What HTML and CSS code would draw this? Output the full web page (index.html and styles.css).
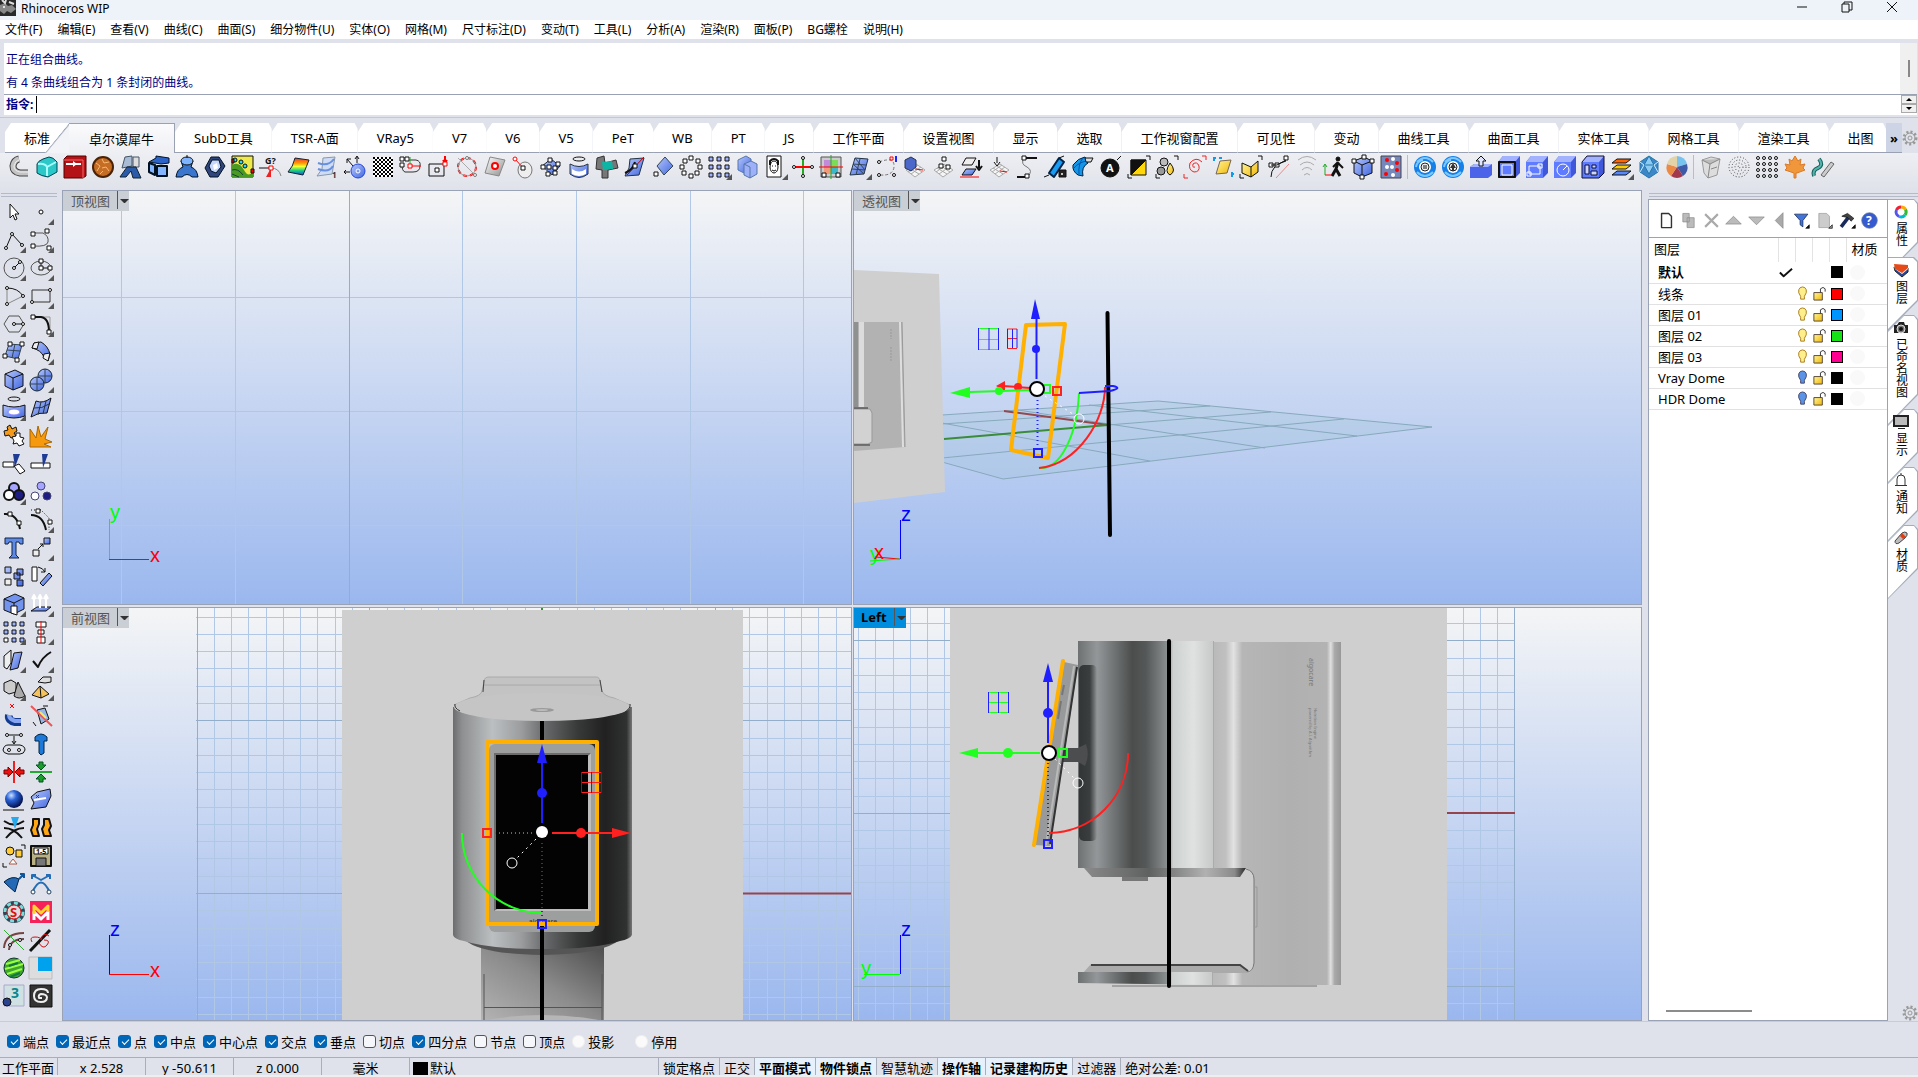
FILE: index.html
```html
<!DOCTYPE html>
<html lang="zh-CN">
<head>
    <meta charset="UTF-8">
    <meta name="viewport" content="width=device-width, initial-scale=1.0">
    <title>Rhinoceros WIP</title>
    <link rel="stylesheet" href="styles.css">
</head>
<body>
<svg class="defs" aria-hidden="true">
    <defs>
        <linearGradient id="gb" x1="0" y1="0" x2="1" y2="1"><stop offset="0" stop-color="#b7c8fc"/><stop offset="1" stop-color="#4167e0"/></linearGradient>
        <linearGradient id="gs" x1="0" y1="0" x2="1" y2="1"><stop offset="0" stop-color="#fff"/><stop offset="1" stop-color="#8d8d8d"/></linearGradient>
        <linearGradient id="gy" x1="0" y1="0" x2="1" y2="1"><stop offset="0" stop-color="#fff59a"/><stop offset="1" stop-color="#f2b705"/></linearGradient>
        <linearGradient id="gr" x1="0" y1="0" x2="0" y2="1"><stop offset="0" stop-color="#e33"/><stop offset=".3" stop-color="#f90"/><stop offset=".5" stop-color="#ef3"/><stop offset=".75" stop-color="#1c8"/><stop offset="1" stop-color="#24e"/></linearGradient>
        <radialGradient id="ball" cx=".35" cy=".3" r=".7"><stop offset="0" stop-color="#cfe2ff"/><stop offset=".4" stop-color="#2a63d8"/><stop offset="1" stop-color="#03124e"/></radialGradient>
        <linearGradient id="sky" x1="0" y1="0" x2="0" y2="1"><stop offset="0" stop-color="#f4f5f6"/><stop offset="1" stop-color="#9ab7ee"/></linearGradient>
        <linearGradient id="front"><stop offset="0" stop-color="#6a6c6d"/><stop offset=".05" stop-color="#8d8f90"/><stop offset=".22" stop-color="#bcbfc1"/><stop offset=".38" stop-color="#9b9d9f"/><stop offset=".52" stop-color="#656768"/><stop offset=".7" stop-color="#373838"/><stop offset=".85" stop-color="#212121"/><stop offset=".97" stop-color="#303131"/><stop offset="1" stop-color="#777"/></linearGradient>
        <linearGradient id="neck" x1="0" y1="1" x2="1" y2="0"><stop offset="0" stop-color="#b4b4b4"/><stop offset=".5" stop-color="#8b8b8b"/><stop offset="1" stop-color="#4b4b4b"/></linearGradient>
        <linearGradient id="drum"><stop offset="0" stop-color="#6e7172"/><stop offset=".14" stop-color="#939799"/><stop offset=".24" stop-color="#777b7c"/><stop offset=".4" stop-color="#4b4d4c"/><stop offset=".5" stop-color="#555858"/><stop offset=".66" stop-color="#8b9091"/><stop offset=".7" stop-color="#cdd1d0"/><stop offset=".85" stop-color="#dfe2e1"/><stop offset=".99" stop-color="#c7cac9"/><stop offset="1" stop-color="#999"/></linearGradient>
        <linearGradient id="back"><stop offset="0" stop-color="#b9b9b9"/><stop offset=".1" stop-color="#c0c0c0"/><stop offset=".16" stop-color="#e2e2e2"/><stop offset=".23" stop-color="#b6b6b6"/><stop offset=".6" stop-color="#b0b0b0"/><stop offset=".89" stop-color="#b3b3b3"/><stop offset=".92" stop-color="#e0e0e0"/><stop offset=".95" stop-color="#a9a9a9"/><stop offset="1" stop-color="#989898"/></linearGradient>
        <linearGradient id="shade"><stop offset="0" stop-color="#333636"/><stop offset=".6" stop-color="#333636" stop-opacity=".9"/><stop offset="1" stop-color="#333636" stop-opacity="0"/></linearGradient>
        <linearGradient id="lip"><stop offset="0" stop-color="#8a8a8a"/><stop offset=".4" stop-color="#5f6060"/><stop offset=".75" stop-color="#b1b1b1"/><stop offset=".93" stop-color="#8a8a8a"/><stop offset="1" stop-color="#2a2a2a"/></linearGradient>
    </defs>
</svg>

<div class="app">
    <header class="titlebar">
        <svg class="logo" viewBox="0 0 16 16"><rect width="16" height="16" fill="#2a2a2a"/><path d="M0 5L5 3 8 6 12 5 16 9 11 13 7 11 4 14 0 11Z" fill="#888"/><path d="M2 0L5 3 6 0M9 2L14 4" stroke="#ddd" stroke-width="2"/><circle cx="4" cy="7" r="1" fill="#fff"/></svg>
        <h1>Rhinoceros WIP</h1>
        <div class="window-buttons">
            <button aria-label="最小化"><svg viewBox="0 0 12 12"><path d="M1 6H11"/></svg></button>
            <button aria-label="还原"><svg viewBox="0 0 12 12"><path d="M1 3H8V11H1ZM3 3V1H11V9H8"/></svg></button>
            <button aria-label="关闭"><svg viewBox="0 0 12 12"><path d="M1 1L11 11M11 1L1 11"/></svg></button>
        </div>
    </header>

    <nav class="menu">
        <a href="#">文件(F)</a><a href="#">编辑(E)</a><a href="#">查看(V)</a><a href="#">曲线(C)</a><a href="#">曲面(S)</a><a href="#">细分物件(U)</a><a href="#">实体(O)</a><a href="#">网格(M)</a><a href="#">尺寸标注(D)</a><a href="#">变动(T)</a><a href="#">工具(L)</a><a href="#">分析(A)</a><a href="#">渲染(R)</a><a href="#">面板(P)</a><a href="#">BG螺栓</a><a href="#">说明(H)</a>
    </nav>

    <section class="command">
        <div class="history">
            <div class="history-text">
                <p>正在组合曲线。</p>
                <p>有 4 条曲线组合为 1 条封闭的曲线。</p>
            </div>
            <div class="history-scroll"><span></span></div>
        </div>
        <div class="prompt">
            <label for="cmd">指令:</label>
            <input id="cmd" type="text">
            <div class="spin"><button class="up" aria-label="上一条"></button><button class="down" aria-label="下一条"></button></div>
        </div>
    </section>

    <nav class="tabs">
        <button>标准</button><button class="active">卓尔谟犀牛</button><button>SubD工具</button><button>TSR-A面</button><button>VRay5</button><button>V7</button><button>V6</button><button>V5</button><button>PeT</button><button>WB</button><button>PT</button><button>JS</button><button>工作平面</button><button>设置视图</button><button>显示</button><button>选取</button><button>工作视窗配置</button><button>可见性</button><button>变动</button><button>曲线工具</button><button>曲面工具</button><button>实体工具</button><button>网格工具</button><button>渲染工具</button><button class="last">出图</button>
        <button class="more" aria-label="更多">»</button>
        <button class="gear" aria-label="选项"><svg viewBox="0 0 16 16"><circle class="cog" cx="8" cy="8" r="6"/><circle cx="8" cy="8" r="5"/><circle cx="8" cy="8" r="2"/></svg></button>
    </nav>

    <div class="toolbar" id="toolbar"></div>

    <main class="work">
        <aside class="side">
            <div class="grip"></div>
            <div class="side-tools" id="side"></div>
        </aside>

        <div class="views">
            <section class="view">
                <svg class="scene" viewBox="62 190 790 416" preserveAspectRatio="xMinYMin slice">
                    <rect x="62" y="190" width="790" height="416" fill="url(#sky)"/>
                    <path class="minor" d="M121.5 190V606M235.5 190V606M462.5 190V606M576.5 190V606M690.5 190V606M803.5 190V606M62 297.5H852M62 411.5H852M62 525.5H852"/>
                    <path class="major" d="M349.5 190V606"/>
                    <path class="ax-y" d="M109.5 519V559"/><path class="ax-x" d="M109 559.5H149"/>
                    <text class="ty" x="110" y="519">y</text><text class="tx" x="150" y="562">x</text>
                </svg>
                <button class="view-name">顶视图<i></i></button>
            </section>

            <section class="view">
                <svg class="scene" viewBox="853 190 789 416" preserveAspectRatio="xMinYMin slice">
                    <rect x="853" y="190" width="789" height="416" fill="url(#sky)"/>
                    <path d="M942 415L1158 401 1432 427 1003 479 942 462Z" fill="#9cc3d5" fill-opacity=".25"/>
                    <path class="floor" d="M942 415L1158 401 1432 427 1003 479 942 462M942 458L1344 419M1108 425L1271 412M942 424L1210 406M942 423L1150 461M1018 410L1265 448M1089 405L1357 436"/>
                    <path d="M1004 411L1108 425" stroke="#95484e" stroke-width="2"/>
                    <path d="M944 439L1108 425" stroke="#3a8c3a" stroke-width="2"/>
                    <path d="M853 270L939 274 945 492 853 503Z" fill="#cfcfcf"/>
                    <path d="M853 322L902 322 905 447 853 451Z" fill="#b2b2b2"/>
                    <path d="M853 322H858V407H853Z" fill="#8f9191"/><path d="M859 322H864V407H859Z" fill="#dcdcdc"/>
                    <path d="M900 322L903 447" stroke="#dedede" stroke-width="2"/><path d="M902 322L905 447" stroke="#999"/>
                    <path d="M891 329V339M891 347V361" stroke="#999" stroke-dasharray="2 1"/>
                    <path d="M853 409H870L872 413V442L868 444H853Z" fill="#d2d2d2" stroke="#999"/>
                    <path d="M853 408H868M853 445H870" stroke="#333"/>
                    <path d="M1107.5 313L1110 535" stroke="#000" stroke-width="4" stroke-linecap="round"/>
                    <path class="pick" d="M1026 325L1065 324 1048 458 1011 450Z"/>
                    <path class="gl" d="M1079 393C1077 436 1060 470 1039 468"/>
                    <path class="rl" d="M1105 387C1105 420 1078 464 1039 468"/>
                    <path class="bl" d="M1079 393L1110 391Q1123 388 1113 386L1105 386"/>
                    <path class="rl" d="M1030 388L1003 386"/><path class="rf" d="M996 386L1005 381V391Z"/><circle class="rf" cx="1018" cy="387" r="4"/>
                    <path class="gl" d="M1030 390L970 392"/><path class="gf" d="M950 393L970 387V398Z"/><circle class="gf" cx="999" cy="391" r="4"/>
                    <path class="bl" d="M1036.500 379V317"/><path class="bf" d="M1035 299L1040 319H1031Z"/><circle class="bf" cx="1036" cy="349" r="4"/>
                    <path class="bd" d="M1037.500 400V449"/><rect class="bl" x="1034" y="449" width="8" height="8"/>
                    <rect class="gl" x="1043" y="385" width="7" height="8"/><rect class="rl" x="1053" y="387" width="8" height="8"/>
                    <path class="wd" d="M1045 396L1076 416"/><circle class="wo" cx="1079" cy="419" r="5"/>
                    <circle class="hub" cx="1037" cy="389" r="7"/>
                    <path class="gt" d="M979 328.500H999M979 339.500H999M979 349.500H999"/><path class="bt" d="M978.500 328V350M989 328V350M998.500 328V350"/>
                    <path class="rt" d="M1007 329H1017M1007 338.500H1017M1007 348.500H1017"/><path class="bt" d="M1007.500 329V348M1012.500 329V348M1017 329V348"/>
                    <path class="ax-z" d="M900.500 520V559"/><path class="ax-x" d="M900 559L875 557"/><path class="ax-y" d="M900 559L870 561"/>
                    <text class="tz" x="901" y="521">z</text><text class="ty" x="870" y="561">y</text><text class="tx" x="874" y="559">x</text>
                </svg>
                <button class="view-name">透视图<i></i></button>
            </section>

            <section class="view">
                <svg class="scene" viewBox="62 608 790 414" preserveAspectRatio="xMinYMin slice">
                    <rect x="62" y="608" width="790" height="414" fill="url(#sky)"/>
                    <g class="grid" data-x="542" data-y="894" data-left="196" data-right="852"></g>
                    <path d="M542 894.500H852" stroke="#96444b" stroke-width="2"/><path d="M542 608V612" stroke="#3a8c3a" stroke-width="2"/>
                    <rect x="342" y="611" width="401" height="412" fill="#cfcfcf"/>
                    <path d="M484 683Q484 678 489 678H596Q600 678 600 683L602 692Q604 697 614 699L630 706H454L470 699Q481 697 482 692Z" fill="#c3c3c3" stroke="#aaa"/>
                    <path d="M484 686H600" stroke="#aaa"/><path d="M484 681L483 693M600 681L602 693" stroke="#444"/>
                    <path d="M481 944H604V1022H481Z" fill="url(#neck)"/><path d="M484 975V1022M602 975V1022M484 1008.500H602" stroke="#555"/><path d="M481 1022Q542 1010 604 1022Z" fill="#b6b6b6"/>
                    <path d="M465 941Q480 955 542 956Q604 955 619 941Z" fill="#555"/>
                    <path d="M453 708V936Q454 940 464 942Q488 950 542 950Q596 950 620 942Q630 940 632 936V708Z" fill="url(#front)"/>
                    <ellipse cx="542" cy="708" rx="88" ry="14" fill="#c5c5c5"/><path d="M455 705Q454 709 460 712M630 705Q631 709 625 713" fill="none" stroke="#333"/>
                    <ellipse cx="542" cy="711" rx="12" ry="2" fill="#999"/><ellipse cx="542" cy="711" rx="6" ry="1" fill="#bbb"/>
                    <path d="M542 722V1022" stroke="#000" stroke-width="4"/>
                    <rect x="489" y="745" width="106" height="188" rx="6" fill="#9d9e9e"/><rect x="494" y="754" width="97" height="158" fill="#bdbdbd"/><path d="M494 754H591L588 757H497V910L494 912Z" fill="#6c6c6c"/><rect x="496" y="756" width="92" height="154" fill="#030303"/>
                    <text class="brand dark" x="543" y="925" text-anchor="middle">algocare</text>
                    <path d="M542 925V1022" stroke="#000" stroke-width="4"/>
                    <rect class="pick" x="487" y="743" width="110" height="182"/>
                    <path class="gl" d="M462 834A80 80 0 0 0 542 914"/>
                    <path class="bl" d="M542 824V762"/><path class="bf" d="M542 745L547 764H537Z"/><circle class="bf" cx="542" cy="794" r="5"/>
                    <path class="rl" d="M552 834H614"/><path class="rf" d="M631 834L612 829V839Z"/><circle class="rf" cx="581" cy="834" r="5"/>
                    <path class="rd" d="M495 834H534"/><rect class="rl" x="483" y="830" width="8" height="8"/>
                    <path class="bd" d="M542 844V920"/><rect class="bl" x="538" y="921" width="8" height="8"/>
                    <path class="wd" d="M536 840L516 860"/><circle class="wo" cx="512" cy="864" r="5"/><circle cx="542" cy="833" r="6" fill="#fff"/>
                    <path class="rt" d="M582 773.500H602M582 783.500H602M582 793.500H602"/><path class="bt" d="M581.500 773V794M591.500 773V794M601.500 773V794"/>
                    <path class="ax-z" d="M109.500 936V975"/><path class="ax-x" d="M109 975.500H149"/>
                    <text class="tz" x="110" y="937">z</text><text class="tx" x="150" y="978">x</text>
                </svg>
                <button class="view-name">前视图<i></i></button>
            </section>

            <section class="view">
                <svg class="scene" viewBox="853 608 789 414" preserveAspectRatio="xMinYMin slice">
                    <rect x="853" y="608" width="789" height="414" fill="url(#sky)"/>
                    <g class="grid" data-x="1169" data-y="814" data-left="853" data-right="1515"></g>
                    <path d="M1169 814H1515" stroke="#96444b" stroke-width="2"/>
                    <rect x="950" y="609" width="497" height="413" fill="#cfcfcf"/>
                    <path d="M1213 643H1341V986H1213V974H1248Q1254 972 1254 964V880Q1252 871 1246 869H1213Z" fill="url(#back)"/>
                    <rect x="1078" y="642" width="136" height="227" fill="url(#drum)"/>
                    <rect x="1079" y="666" width="18" height="176" rx="5" fill="url(#shade)"/>
                    <path d="M1084 869H1246L1240 878H1092Z" fill="url(#lip)"/><path d="M1122 878H1148V882H1122Z" fill="#777"/>
                    <path d="M1246 870Q1254 872 1254 880V964Q1253 973 1247 973" fill="none" stroke="#777"/><path d="M1254 888H1257V928H1254" fill="none" stroke="#999"/>
                    <path d="M1091 965H1240L1249 974H1083Z" fill="#aaa"/><path d="M1091 966H1240L1248 972" fill="none" stroke="#444" stroke-width="2"/>
                    <path d="M1078 973H1213V986L1078 984Z" fill="url(#drum)"/><path d="M1112 987H1317" stroke="#777"/>
                    <text class="brand side-brand" transform="translate(1309 659) rotate(90)">algocare</text>
                    <text class="tiny" transform="translate(1314 709) rotate(90)">Nutrition Engine</text><text class="tiny" transform="translate(1309 709) rotate(90)">powered by A.I. Algorithm</text>
                    <path d="M1062 749H1078L1086 745Q1090 756 1085 767L1078 763H1060Z" fill="#4b4d4e"/>
                    <path d="M1064 663L1078 666 1050 847 1035 846Z" fill="#97999a"/><path d="M1074 667L1046 846" stroke="#b9b9b9" stroke-width="2"/><path d="M1077 668L1050 845" stroke="#333" stroke-width="2"/>
                    <path d="M1064 686L1062 696M1061 702L1058 720" stroke="#777" stroke-width="2"/>
                    <path d="M1169 642V987" stroke="#000" stroke-width="4" stroke-linecap="round"/>
                    <path class="pick" d="M1063 662L1034 846"/>
                    <path class="rl" d="M1128 754A80 80 0 0 1 1049 834"/>
                    <path class="bl" d="M1048 744V682"/><path class="bf" d="M1048 664L1053 683H1043Z"/><circle class="bf" cx="1048" cy="714" r="5"/>
                    <path class="gl" d="M1040 754H978"/><path class="gf" d="M959 754L978 749V759Z"/><circle class="gf" cx="1008" cy="754" r="5"/>
                    <rect class="gl" x="1059" y="750" width="8" height="8"/><path class="bd" d="M1048 764V840"/><rect class="bl" x="1044" y="841" width="8" height="8"/>
                    <path class="wd" d="M1055 760L1075 780"/><circle class="wo" cx="1078" cy="784" r="5"/><circle class="hub" cx="1049" cy="754" r="7"/>
                    <path class="gt" d="M988 693.500H1009M988 703.500H1009M988 713.500H1009"/><path class="bt" d="M988.500 693V714M998.500 693V714M1008.500 693V714"/>
                    <path class="ax-z" d="M900.500 936V975"/><path class="ax-y" d="M864 975.500H900"/>
                    <text class="tz" x="901" y="937">z</text><text class="ty" x="861" y="976">y</text>
                </svg>
                <button class="view-name current">Left<i></i></button>
            </section>
        </div>

        <aside class="dock">
            <div class="grip"></div>
            <div class="dock-row">
                <div class="panel">
                    <div class="panel-tools" id="panelTools"></div>
                    <table class="layers">
                        <colgroup><col class="name"><col><col><col><col><col class="mat"></colgroup>
                        <thead><tr><th>图层</th><th></th><th></th><th></th><th></th><th class="mat">材质</th></tr></thead>
                        <tbody id="layers"></tbody>
                    </table>
                    <div class="hscroll"><span></span></div>
                </div>
                <nav class="dock-tabs">
                    <button><svg viewBox="0 0 16 16"><g fill="none" stroke-width="3"><path d="M8 3A5 5 0 0 1 12.500 5.500" stroke="#fa0"/><path d="M12.500 5.500A5 5 0 0 1 12 11" stroke="#3b3"/><path d="M12 11A5 5 0 0 1 6 12.500" stroke="#0bc"/><path d="M6 12.500A5 5 0 0 1 3.500 6" stroke="#55e"/><path d="M3.500 6A5 5 0 0 1 8 3" stroke="#e23"/></g></svg><span>属性</span></button>
                    <button class="active"><svg viewBox="0 0 16 16"><path d="M1 5L15 6V10L9 15 2 9Z" fill="#234a9c" stroke="#222"/><path d="M1 3L15 4V7L9 12 2 7Z" fill="#fff"/><path d="M1 2L15 3V6L9 11 2 7Z" fill="#e64a19"/></svg><span>图层</span></button>
                    <button><svg viewBox="0 0 16 16"><path d="M1 5H4L6 2H11L12 5H15V13H1Z" fill="#222"/><circle cx="8" cy="9" r="4" fill="#777" stroke="#ddd"/><circle cx="8" cy="9" r="2" fill="#111"/></svg><span>已命名视图</span></button>
                    <button><svg viewBox="0 0 16 16"><path d="M1 2H15V12H1Z" fill="#bbb" stroke="#222" stroke-width="2"/><path d="M5 14H12V15H5Z" fill="#222"/></svg><span>显示</span></button>
                    <button><svg viewBox="0 0 16 16"><path d="M4 13V7Q4 3 8 3Q12 3 12 7V13M2 13.500H14M7 2H9" fill="none" stroke="#333"/></svg><span>通知</span></button>
                    <button><svg viewBox="0 0 16 16"><path d="M2 11L9 3Q12 1 14 3Q15 5 12 8L6 13Q2 15 2 11Z" fill="#bbb" stroke="#444"/><path d="M7 6L9 3 13 7 10 9Z" fill="#e43a12"/></svg><span>材质</span></button>
                </nav>
                <svg class="dock-gear" viewBox="0 0 16 16"><circle class="cog" cx="8" cy="8" r="6"/><circle cx="8" cy="8" r="5"/><circle cx="8" cy="8" r="2"/></svg>
            </div>
        </aside>
    </main>

    <form class="osnap">
        <label><input type="checkbox" checked>端点</label><label><input type="checkbox" checked>最近点</label><label><input type="checkbox" checked>点</label><label><input type="checkbox" checked>中点</label><label><input type="checkbox" checked>中心点</label><label><input type="checkbox" checked>交点</label><label><input type="checkbox" checked>垂点</label><label><input type="checkbox">切点</label><label><input type="checkbox" checked>四分点</label><label><input type="checkbox">节点</label><label><input type="checkbox">顶点</label><label><input class="soft" type="checkbox">投影</label><label class="apart"><input class="soft" type="checkbox">停用</label>
    </form>

    <footer class="status">
        <button>工作平面</button><span class="coord">x 2.528</span><span class="coord">y -50.611</span><span class="coord">z 0.000</span><span class="coord">毫米</span><span class="layer"><i></i>默认</span>
        <button>锁定格点</button><button>正交</button><button class="on">平面模式</button><button class="on">物件锁点</button><button>智慧轨迹</button><button class="on">操作轴</button><button class="on">记录建构历史</button><button>过滤器</button><span class="rest">绝对公差: 0.01</span>
    </footer>
</div>
<script src="script.js"></script>
</body>
</html>
```

FILE: styles.css
```css
* { box-sizing: border-box; }
body {
    margin: 0;
    background: #dfe2ea;
    color: #000;
    font-family: "Noto Sans", "Noto Sans CJK SC", sans-serif;
    font-size: 13px;
}
button, input { font: inherit; color: inherit; }
button { border: 0; padding: 0; background: none; }
p, h1 { margin: 0; }
svg { display: block; }
.defs { position: absolute; width: 0; height: 0; }
.app { min-height: 100vh; display: flex; flex-direction: column; overflow: hidden; }

/* title and menu */
.titlebar { height: 20px; display: flex; align-items: flex-start; background: #eef3fa; }
.logo { width: 16px; height: 16px; }
.titlebar h1 { margin-left: 5px; font-size: 12px; font-weight: 400; line-height: 17px; }
.window-buttons { margin-left: auto; display: flex; gap: 33px; padding: 1px 20px 0 0; }
.window-buttons svg { width: 12px; height: 12px; fill: none; stroke: #111; }
.menu { display: flex; gap: 15px; height: 19px; padding-left: 5px; background: #fff; font-size: 12px; line-height: 19px; }
.menu a { color: #000; text-decoration: none; }

/* command line */
.command { margin: 4px 1px 0 4px; height: 72px; background: #fff; display: flex; flex-direction: column; font-size: 12px; color: #000080; }
.history { flex: 1; display: flex; border-bottom: 1px solid #99a1b3; }
.history-text { flex: 1; padding: 5px 2px 0; line-height: 23px; }
.history-scroll { width: 17px; background: #f0f0f0; padding: 17px 0 0 8px; }
.history-scroll span { display: block; width: 2px; height: 17px; background: #888; }
.prompt { display: flex; height: 21px; padding: 0 0 3px 2px; align-items: center; }
.prompt label { font-weight: 700; }
.prompt input { flex: 1; height: 17px; margin-left: 3px; border: 0; border-left: 1px solid #000; outline: 0; background: #fff; }
.spin { width: 16px; display: flex; flex-direction: column; }
.spin button { display: grid; place-items: center; height: 9px; border: 1px solid #aaa; background: #f0f0f0; }
.spin button::after { content: ""; border: solid transparent; border-width: 0 3px 3px; border-bottom-color: #000; }
.spin .down::after { border-width: 3px 3px 0; border-top-color: #000; }

/* toolbar tabs */
.tabs { display: flex; height: 36px; margin-top: 2px; padding: 5px 0 0 5px; border-top: 1px solid #c2c8d5; }
.tabs button { padding: 0 19px; height: 30px; background: #fff; clip-path: polygon(6px 0, calc(100% - 3px) 0, 100% 6px, 100% 100%, 0 100%, 0 9px); white-space: nowrap; border-bottom: 1px solid #99a1b3; }
.tabs .active { position: relative; background: linear-gradient(#fbfbfd, #eeeff3); clip-path: polygon(0 0, 100% 0, 100% 100%, -24px 100%, 0 0); border-top: 1px solid #99a1b3; border-right: 1px solid #99a1b3; border-bottom: 0; padding: 0 20px; }
.tabs .active::before { content: ""; position: absolute; z-index: -1; top: 0; left: -24px; width: 24px; height: 29px; background: linear-gradient(to bottom right, transparent 49%, #99a1b3 50%, #f3f4f7 54%); }
.tabs button:first-child { clip-path: polygon(6px 0, 100% 0, calc(100% - 24px) 100%, 0 100%, 0 9px); }
.tabs .last { flex: 1; padding: 0 6px 0 19px; text-align: left; }
.tabs .more { width: 16px; padding: 0; background: #cdd4e6; clip-path: none; font-weight: 700; }
.tabs .gear { width: 16px; padding: 0; background: none; clip-path: none; border: 0; }
.gear svg, .dock-gear { width: 16px; height: 16px; fill: none; stroke: #999; }
.cog { stroke-width: 3; stroke-dasharray: 2 2; }

/* icon toolbars */
.toolbar { display: flex; height: 37px; padding: 0 0 0 5px; background: linear-gradient(#eeeff3, #dfe2ea); }
.tool { position: relative; width: 28px; height: 28px; display: grid; place-items: center; flex: none; }
.tool svg { width: 24px; height: 24px; overflow: visible; }
.tool.more::after { content: ""; position: absolute; right: 1px; bottom: 1px; border: 3px solid transparent; border-right-color: #555; border-bottom-color: #555; }
.sep { width: 1px; height: 24px; margin: 2px 3px 0 2px; background: #b9bdc9; }
.work { flex: 1; display: flex; min-height: 0; }
.side { width: 62px; padding-top: 3px; }
.grip { height: 4px; margin: 0 5px 0 1px; border: solid #b4bac8; border-width: 1px 0; }
.side-tools { display: grid; grid-template-columns: 27px 28px; padding-top: 1px; }
.side-tools .tool { width: auto; }

/* viewports */
.views { flex: 1; display: grid; grid-template: 416fr 414fr / 790fr 789fr; gap: 2px 1px; min-width: 0; }
.view { position: relative; min-height: 0; border: 1px solid #9aa3b5; overflow: hidden; }
.scene { position: absolute; inset: -1px; width: calc(100% + 2px); height: calc(100% + 2px); }
.view-name { position: relative; display: flex; align-items: center; height: 20px; padding: 0 0 2px 8px; background: #cacfd6; color: #555; }
.view-name i { display: block; width: 12px; height: 18px; margin-left: 7px; border-left: 1px solid #555; }
.view-name i::after { content: ""; display: block; margin: 8px 0 0 2px; border: 4px solid transparent; border-top-color: #333; }
.view-name.current { background: #008ddd; color: #000; font-weight: 700; padding-left: 7px; }
.minor { stroke: #b1c7e6; fill: none; }
.major { stroke: #93aecb; fill: none; }
.floor { stroke: #87a9bc; fill: none; }
.pick { fill: none; stroke: #ffb000; stroke-width: 4; stroke-linejoin: round; stroke-linecap: round; }
.bl, .bd { fill: none; stroke: #2020ff; stroke-width: 2; }
.rl, .rd { fill: none; stroke: #ff2020; stroke-width: 2; }
.gl { fill: none; stroke: #20ff20; stroke-width: 2; }
.bd, .rd { stroke-dasharray: 1 3; }
.bf { fill: #2020ff; }
.rf { fill: #ff2020; }
.gf { fill: #20ff20; }
.gt { stroke: #20ff20; }
.bt { stroke: #2020ff; }
.rt { stroke: #ff2020; }
.wd { stroke: #fff; stroke-dasharray: 2 4; }
.wo { fill: none; stroke: #fff; }
.hub { fill: #fff; stroke: #000; stroke-width: 2; }
.ax-x { stroke: #f00; }
.ax-y { stroke: #0f0; }
.ax-z { stroke: #00f; }
.tx, .ty, .tz { font-family: "Liberation Sans", sans-serif; font-size: 20px; }
.tx { fill: #f00; }
.ty { fill: #0f0; }
.tz { fill: #00f; }
.brand { font-size: 7px; fill: #777; }
.dark { fill: #333; }
.tiny { font-size: 4px; fill: #777; }

/* layer panel */
.dock { width: 276px; padding: 3px 0 0 6px; display: flex; flex-direction: column; }
.dock .grip { margin-right: 0; }
.dock-row { position: relative; flex: 1; display: flex; margin-top: 2px; }
.panel { flex: 1; display: flex; flex-direction: column; background: #fff; border: 1px solid #9aa3b5; min-width: 0; }
.panel-tools { height: 38px; display: flex; align-items: center; justify-content: space-between; padding: 3px 7px 0; border-bottom: 1px solid #9aa3b5; }
.panel-tools .tool { width: 20px; height: 20px; }
.panel-tools svg { width: 17px; height: 17px; }
.layers { width: 100%; border-collapse: collapse; table-layout: fixed; }
.layers col { width: 17px; }
.layers .name { width: 129px; }
.layers col.mat { width: 41px; }
.layers th { height: 24px; padding: 0 0 2px 5px; border-right: 1px solid #e3e3e3; text-align: left; font-weight: 400; line-height: 18px; }
.layers th.mat { border: 0; }
.layers td { height: 21px; padding: 0; border-bottom: 1px solid #e1e1e1; line-height: 18px; }
.layers td:first-child { padding-left: 9px; }
.layers .default td { font-weight: 700; }
.layers svg { width: 15px; height: 15px; }
.swatch { display: block; width: 12px; height: 12px; border: 1px solid #000; margin-left: 2px; }
.dot { display: block; width: 15px; height: 15px; margin-left: 4px; border-radius: 50%; background: #f9f9f9; }
.hscroll { margin-top: auto; padding: 0 0 8px 17px; }
.hscroll span { display: block; width: 86px; height: 2px; background: #8c8c8c; }
.dock-tabs { width: 30px; display: flex; flex-direction: column; flex: none; }
.dock-tabs button { position: relative; display: flex; flex-direction: column; align-items: center; gap: 2px; padding: 5px 5px 11px 0; font-size: 12px; line-height: 14px; }
.dock-tabs button::before, .dock-tabs button::after { content: ""; position: absolute; z-index: -1; inset: 0 0 -16px 0; background: #a4abbb; clip-path: polygon(0 16px, 16px 0, 26px 0, 100% 4px, 100% calc(100% - 30px), 0 100%); }
.dock-tabs button::after { inset: 1px 1px -15px 0; background: #fff; }
.dock-tabs button:first-child::before, .dock-tabs button:first-child::after, .dock-tabs .active::before, .dock-tabs .active::after { clip-path: polygon(0 0, 26px 0, 100% 4px, 100% calc(100% - 30px), 0 100%); }
.dock-tabs .active::after { left: -1px; }
.dock-tabs svg { width: 16px; height: 16px; }
.dock-tabs span { writing-mode: vertical-rl; }
.dock-gear { position: absolute; right: 0; bottom: 0; }

/* bottom bars */
.osnap { height: 36px; display: flex; align-items: center; gap: 7px; padding: 4px 0 0 7px; border-top: 1px solid #c8ccd6; }
.osnap label { display: flex; align-items: center; gap: 3px; }
.osnap input { appearance: none; width: 13px; height: 13px; margin: 0; border: 1px solid #555; border-radius: 3px; background: #f6f7fa; }
.osnap input:checked { border-color: #0067b8; background: #0067b8; }
.osnap input:checked::after { content: ""; display: block; width: 6px; height: 3px; margin: 3px 0 0 3px; border: solid #fff; border-width: 0 0 1px 1px; rotate: -45deg; }
.osnap input.soft { border-color: #eee; border-radius: 6px; background: #fafafa; }
.osnap .apart { margin-left: 14px; }
.status { height: 20px; display: flex; border-top: 1px solid #a9aebb; border-bottom: 2px solid #eee; line-height: 21px; overflow: hidden; }
.status > * { padding: 0 4px; border-right: 1px solid #a9aebb; white-space: nowrap; height: 21px; }
.status > :first-child { padding: 0 3px 0 2px; }
.status .coord { width: 88px; text-align: center; }
.status .layer { width: 249px; display: flex; align-items: center; gap: 2px; padding-left: 3px; }
.layer i { width: 15px; height: 14px; background: #000; }
.status .on { background: #e6f1fb; font-weight: 700; }
.status .rest { flex: 1; border: 0; }
```

FILE: script.js
```js
// small drawing helpers, every icon is drawn in a 24x24 box
const p = (d, f = 'none', s = '#111', w = 1) => `<path d="${d}" fill="${f}" stroke="${s}" stroke-width="${w}" stroke-linejoin="round"/>`;
const c = (x, y, r, f = 'none', s = '#111', w = 1) => `<circle cx="${x}" cy="${y}" r="${r}" fill="${f}" stroke="${s}" stroke-width="${w}"/>`;
const e = (x, y, a, b, f = 'none', s = '#111') => `<ellipse cx="${x}" cy="${y}" rx="${a}" ry="${b}" fill="${f}" stroke="${s}"/>`;
const n = (...a) => { let o = ''; for (let i = 0; i < a.length; i += 2) o += p(`M${a[i] - 2} ${a[i + 1] - 2}h4v4h-4Z`, '#fff'); return o; };
const o = (...a) => { let r = ''; for (let i = 0; i < a.length; i += 2) r += c(a[i], a[i + 1], 1.5, '#fff'); return r; };
const t = (x, y, s, txt, f = '#111') => `<text x="${x}" y="${y}" font-size="${s}" font-weight="700" fill="${f}">${txt}</text>`;
const B = 'url(#gb)', G = 'url(#gs)', Y = 'url(#gy)', none = 'none';
const block = (top) => p('M1 7L6 1H23V18L18 23H1Z', '#3f57d8', none) + p('M1 7L6 1H23L18 7Z', '#a3b2ff', none) + p('M1 7H18V23H1Z', '#5f7bff', none) + top;
const corners = p('M1 19V23H5M19 1H23V5');
const cube = p('M3 6L13 2 21 6V18L11 22 3 18Z', B) + p('M3 6L11 10 21 6M11 10V22');
const swirl = c(12, 12, 11, '#1580e8', none) + p('M4 7Q12-1 20 7M20 17Q12 25 4 17M3 12Q4 6 10 5', none, '#7cc8ff', 2) + c(12, 12, 6, '#fff', none) + c(12, 12, 4, '#eee', '#222');
const mesh = p('M3 15L13 9 22 15 12 22ZM6 13L16 19M10 11L19 17M8 19L18 12M5 17L15 10', '#f5f5f5', '#aaa');

const toolbar = [
    ['管', p('M21 18H13Q6 17 6 11Q7 5 12 4', none, '#444', 7) + p('M21 18H13Q6 17 6 11Q7 5 12 4', none, '#c4c4c4', 5) + p('M21 17H13Q7 16 7 11Q8 6 12 5', none, '#eee', 1)],
    ['方块', p('M2 9Q3 6 8 4L14 2Q18 2 22 7V17L13 22Q6 21 2 18Z', '#2cc7c7', '#045') + p('M3 9Q10 8 12 12V21M12 12L21 7', none, '#a8ffff', 2)],
    ['盒', p('M1 4L4 1H23V21L20 23H1Z', '#b31217', '#500') + p('M1 5H20V23', none, '#f66') + p('M3 9H18', none, '#fff', 2) + p('M10 6L14 9 10 12', '#fff', none)],
    ['球', c(12, 12, 10, '#c56d25', '#4a2206', 2) + p('M5 8L9 11 6 16M11 4L13 8 18 7M11 13L15 12 18 16M9 19L12 16', none, '#f7b872', 1)],
    ['窗', p('M6 2L13 1V11L3 13Z', '#a9bcd6', '#456') + p('M14 2H20V12H14Z', '#ddd', '#456') + p('M8 12H17L22 23H14L12 16 7 22H1Z', '#2b5aa8', '#123')],
    ['板', p('M2 7L9 3V1L22 3V8L14 9Z', '#2b63c6', '#012') + p('M2 8L8 10V20L2 17ZM10 11H20V21H10Z', '#83b6ff', '#012', 2)],
    ['椅', p('M6 6H18L16 12Q22 14 23 22H17Q12 17 7 22H1Q2 14 8 12Z', '#3a76cd', '#012') + e(12, 6, 6, 4, '#7fb4ff') + p('M12 0V3')],
    ['螺母', p('M8 2H16L22 11 15 22H7L2 13Z', '#30457e', '#012') + p('M9 5L16 5 18 12 13 18 8 16 6 11Z', '#c7d6fb', '#012') + p('M10 10L14 8 15 13 11 15Z', '#fff', none)],
    ['地图', p('M1 1H22V22H1Z', '#efe94c', '#111') + p('M1 10Q8 6 13 15T22 15V22H1Z', '#4a9a22', none) + p('M1 15Q7 13 12 20M1 19L8 22', none, '#143') + c(4, 5, 2, '#2df') + c(10, 7, 2, '#2df') + c(14, 11, 2, '#2df') + p('M1 4H3V8H1ZM20 14H23V18H20Z', 'red')],
    ['连续性', t(6, 9, 9, 'G?') + p('M0 13H12') + p('M12 13Q20 13 22 21', none, '#888') + p('M12 13L7 22H12Z', '#e22', none) + p('M10 11H14V15H10Z', '#fff', 'red')],
    ['斑马纹', p('M8 3L22 5Q20 10 16 20L1 17Q6 12 8 3Z', 'url(#gr)', '#123')],
    ['曲率', p('M8 3L20 2 17 19 2 21 7 14Z', '#cfdcf8', '#89a') + p('M3 8Q13 12 19 4M3 14Q14 18 18 11', none, '#668fdf', 2) + t(17, 23, 8, '1', '#333')],
    ['缩放球', c(15, 16, 7, 'url(#gb)', '#24d') + c(15, 16, 2, none, '#fff') + p('M14 8V2M12 4L14 1 16 4M10 11L4 4M4 8V4H8M7 17H1M3 15L1 17 3 19')],
    ['棋盘', p('M2 2H22V22H2Z', '#fff', none) + `<path d="M2 3H22M2 7H22M2 11H22M2 15H22M2 19H22" stroke="#000" stroke-width="2" stroke-dasharray="2 2"/><path d="M4 5H22M4 9H22M4 13H22M4 17H22M4 21H22" stroke="#000" stroke-width="2" stroke-dasharray="2 2"/>`],
    ['操作轴', p('M8 5H17Q22 6 21 11Q21 17 14 17H6Q3 16 3 10', none, '#333') + n(3, 4, 8, 4, 3, 10) + p('M11 11V2', none, '#2a2') + p('M11 11H22', none, 'red') + p('M9 9H13V13H9Z', '#fff', 'red')],
    ['移入', p('M2 9H17V21H2Z') + n(10, 15) + p('M18 1V7M16 5L18 8 20 5', none, 'red', 2) + p('M16 7H20V11H16Z', '#fff', 'red')],
    ['虚线圆', `<circle cx="12" cy="12" r="9" fill="none" stroke="red" stroke-width="2" stroke-dasharray="4 3"/>` + c(12, 12, 9, none, '#999') + p('M3 3L21 21', none, '#aaa') + c(12, 3, 1.5, '#fff', '#777') + c(20, 20, 1.5, '#fff', '#777')],
    ['页', p('M7 2L22 5 16 21 2 18Z', G, '#888') + c(12, 11, 3, '#fff', 'red', 2)],
    ['椭圆', e(14, 15, 7, 8, '#eee', '#777') + p('M4 4L13 14', none, 'red') + c(4, 4, 2, '#fff', 'red') + n(12, 13)],
    ['控制点', p('M3 11L12 4 21 11 13 20Z', B, '#234') + n(4, 12, 10, 12, 16, 13, 11, 5, 19, 9, 9, 19, 16, 18)],
    ['圆柱', e(12, 4, 6, 2) + p('M3 9Q12 14 21 9V19Q12 26 3 19Z', B, '#234') + p('M5 14Q12 19 19 14V19Q12 23 5 19Z', '#fff', none)],
    ['十字', p('M2 3L9 1 10 8 21 5 23 13 13 15V23H7L7 15 1 14Z', '#777', '#333') + p('M7 7L17 6 18 14 8 15Z', '#0db5a5', none)],
    ['曲面', p('M7 4L21 3 16 20 2 21 6 13Z', B, '#234') + p('M4 20L21 2', none, '#c00') + p('M2 18Q10 15 12 7', none, '#111', 2) + n(12, 11)],
    ['菱形', p('M14 2L22 11 13 20 6 11Z', B, '#345') + n(5, 19)],
    ['环形阵列', n(12, 3, 19, 6, 21, 12, 18, 18, 12, 21, 5, 18, 3, 12, 6, 6)],
    ['矩形阵列', n(4, 4, 12, 4, 20, 4, 4, 12, 12, 12, 20, 12, 4, 20, 12, 20, 20, 20).replaceAll('#fff', '#9db2ff'), 1],
    ['布尔', p('M3 5L11 1 16 4V14L9 18 3 15Z', B, '#57a') + p('M9 9L16 6 22 9V19L15 23 9 20Z', '#9eb0f7', '#57a') + p('M9 9L15 12V23', none, '#57a')],
    ['脸', p('M4 1H18V22H4Z', '#fff') + e(11, 12, 4, 6, '#fff') + p('M7 10V6Q11 2 15 6V10', none, '#111', 2) + p('M9 11H10M12 11H13M9 15Q11 17 13 15'), 1],
    ['轴', p('M12 2V22', none, '#2a2', 2) + p('M2 12H22', none, 'red', 2) + o(12, 3, 12, 21, 3, 12, 21, 12)],
    ['彩格', p('M2 2H22V22H2Z', '#ccc', '#555') + p('M5 5H12V12H5Z', '#c18bd9', none) + p('M12 5H19V12H12Z', '#7bdc5a', none) + p('M5 12H12V19H5Z', '#f19a78', none) + p('M12 12H19V19H12Z', '#3bb9c9', none) + p('M12 0V24', none, '#2a2') + p('M0 12H24', none, 'red') + n(5, 20, 19, 20)],
    ['网面', p('M8 3L21 4 17 19 3 20Z', B, '#234') + p('M6 9L19 10M5 14L18 15M13 4L9 20M6 9L17 19M8 3L18 15', none, '#345'), 1],
    ['弧点', `<path d="M4 7Q20 1 19 12Q18 21 5 20" fill="none" stroke="#777" stroke-dasharray="3 2"/>` + o(4, 7, 19, 20, 4, 20) + p('M15 2H18V5H15Z', none, 'red') + p('M21 1V7', none, '#22f', 2)],
    ['盒网格', mesh + p('M2 5L8 2 13 5V12L8 16 2 13Z', '#4b67c9', '#235') + p('M12 14L20 15', none, 'red')],
    ['点网格', mesh + n(13, 4, 17, 12, 10, 11)],
    ['投影', p('M7 3H17L13 10H3Z', '#eee') + p('M7 14H17L13 20H3Z', B, '#111') + p('M1 22H20', none, 'red') + p('M20 5V13M17 11L20 15 23 11', none, '#111', 2)],
    ['落网格', mesh + p('M10 2V8M7 7L10 11 13 7', none, '#111') + p('M13 16L20 17', none, 'red')],
    ['S线', p('M8 3H22M2 22H12', none, '#111', 2) + p('M9 3Q5 9 12 12Q19 16 12 22', none, '#777') + n(9, 3, 12, 21)],
    ['圆管', p('M6 18L16 3 21 7 11 22Z', '#179bf3', '#024', 2) + p('M16 3L21 1M6 20L1 22') + p('M16 15H23V22H16Z', '#222') + c(19, 19, 1, '#fff', none)],
    ['弯面', p('M2 10Q7 3 14 2L17 8Q10 12 12 21L7 20Q1 16 2 10Z', '#1595e8', '#024', 1) + p('M3 13Q8 7 16 6M8 19Q7 9 12 3', none, '#05a') + p('M14 3H22L20 7H15Z', '#ddd')],
    ['字母', c(11, 13, 9, '#111') + t(7, 17, 11, 'A', '#fff') + p('M18 5L22 1')],
    ['黑黄', p('M4 5H19V20H4Z', '#ffd60a') + p('M4 5H19L4 20Z', '#111') + corners],
    ['形状', c(9, 7, 4, '#bbb') + c(6, 16, 4, '#999') + p('M15 8Q22 16 15 20Q9 17 15 8Z', Y) + corners],
    ['螺旋', p('M12 12Q9 13 10 9Q14 6 16 11Q17 17 11 17Q5 15 7 8Q13 1 19 7', none, '#e22') + p('M1 19V23H5M19 1H23V5', none, '#e22')],
    ['黄面', p('M9 6L20 5 16 18 5 19Z', Y, '#765') + p('M2 3H5M3 2V6M8 3H11M20 19H23M21 17V22', none, '#19e', 2)],
    ['黄盒', p('M3 8L12 12 19 6V17L12 22 3 18Z', Y) + p('M12 12V22') + corners],
    ['曲线点', p('M4 22Q4 10 19 6') + p('M9 23L22 9', none, '#e88') + n(4, 10, 10, 10, 19, 3) + p('M4 10H10L19 5')],
    ['波', p('M3 5Q12-2 21 5M5 10Q12 4 19 10M7 15Q12 10 17 15M9 20Q12 17 15 20', none, '#aaa')],
    ['行走', c(15, 4, 2, '#111') + p('M15 7L13 14 17 21M13 14L9 21', none, '#111', 3) + p('M15 8L20 13M14 8L10 12', none, '#111', 2) + p('M2 20V10M0 12L2 9 4 12', none, '#2a2') + p('M2 20H9', none, 'red')],
    ['立方', cube + n(3, 6, 13, 2, 21, 6, 11, 22)],
    ['红点', p('M2 1H22V23H2Z', '#7687b9', '#445') + c(8, 5, 2, 'red', none) + c(14, 4, 2, '#fff', none) + c(18, 8, 2, 'red', none) + c(8, 12, 2, '#fff', none) + c(13, 12, 2, '#fff', none) + c(18, 15, 2, 'red', none) + c(7, 19, 2, 'red', none) + c(14, 20, 2, '#fff', none)],
    null,
    ['旋一', swirl + p('M11 10V14M13 10V14')],
    ['旋二', swirl + p('M12 8L15 13H13V16H11V13H9Z', '#333', none)],
    ['挤出', p('M1 12L5 9H23V20L19 23H1Z', '#4a63e8', none) + p('M1 12L5 9H23L19 12Z', '#a3b2ff', none) + p('M10 11V6H7L12 1 17 6H14V11Z', '#dfe4ff')],
    ['方框', block(p('M5 10H15V20H5Z', none, '#fff') + p('M2 7H18V22H2Z', none, '#111', 2))],
    ['矩形', block(p('M4 11H15V19H4Z', none, '#fff') + p('M13 9H17V13H13ZM2 17H6V21H2Z', none, '#fff'))],
    ['圆', block(c(10, 15, 6, none, '#fff') + p('M10 15L14 11', none, '#fff'))],
    ['多孔', block(p('M4 10H8V19H4ZM11 10H15V13H11ZM10 16H16V20H10Z', '#cdd6ff', '#113') + p('M1 7L6 1H23V18L18 23H1Z', none, '#113'))],
    ['图层', p('M8 4H22L17 8H3Z', '#f60') + p('M8 10H22L17 14H3Z', '#fc0') + p('M8 16H22L17 20H3Z', '#58f'), 1],
    ['宝石', p('M12 1L21 7V17L12 23 3 17V7Z', '#3d87c9', '#27a') + p('M12 1L7 10H17ZM7 10L12 19 17 10', '#8ecbf3', '#27a') + p('M3 7L7 10 3 17M21 7L17 10 21 17', none, '#cef')],
    ['色轮', p('M12 1A11 11 0 0 1 22 9L12 12Z', '#78c2ef', none) + p('M22 9A11 11 0 0 1 18 21L12 12Z', '#3e5aa6', none) + p('M18 21A11 11 0 0 1 6 21L12 12Z', '#a2384d', none) + p('M6 21A11 11 0 0 1 2 9L12 12Z', '#ea8a45', none) + p('M2 9A11 11 0 0 1 12 1V12Z', '#e2d3a8', none)],
    null,
    ['纸团', p('M3 5L12 2 21 4 18 20 9 23 5 18Z', '#ddd', '#999') + p('M3 5L11 9 21 4M11 9L9 23M12 14L18 12', '#bbb', '#888')],
    ['点圆', [10, 7, 4, 1].map(r => `<circle cx="12" cy="12" r="${r}" fill="none" stroke="#444" stroke-dasharray="1 2"/>`).join('')],
    ['点阵', [3, 9, 15, 21].map(y => c(3, y, 1.5) + c(9, y, 1.5) + c(15, y, 1.5) + c(21, y, 1.5)).join('')],
    ['枫叶', p('M12 1L15 6 18 4 17 10 22 9 20 13 22 15 14 18H13V23H11V18L2 15 4 13 2 9 7 10 6 4 9 6Z', '#f0973c', '#d97a26')],
    ['笔', p('M3 21Q1 15 7 13Q13 10 8 4', none, '#175e5c', 4) + p('M3 21Q1 15 7 13Q13 10 8 4', none, '#52b5ad', 2) + p('M10 20L20 7 23 9 13 22Z', '#ccc', '#666')]
];

const side = [
    ['选取', p('M8 4V18L11 15 13 20 15 19 13 14H17Z', '#fff')],
    ['点', c(12, 12, 2, '#fff'), 1],
    ['多段线', p('M4 20L10 6 20 17') + o(4, 20, 10, 6, 20, 17), 1],
    ['曲线', p('M4 5H14Q20 8 19 14Q18 19 4 18', none, '#555') + n(4, 6, 18, 3, 4, 18, 20, 20), 1],
    ['圆', c(12, 12, 10, none, '#555') + p('M12 12L18 6') + o(12, 12, 18, 6), 1],
    ['椭圆', e(12, 12, 10, 7, none, '#555') + p('M12 12V5M12 12H21') + n(12, 5, 12, 12, 21, 12), 1],
    ['圆弧', p('M5 4Q16 4 21 12') + p('M5 4V20L21 12', none, '#888') + o(5, 4, 5, 20, 21, 12), 1],
    ['矩形', p('M3 6H21V18H3Z', none, '#333', 1) + o(3, 18, 21, 6), 1],
    ['多边形', p('M7 4H17L22 12 17 20H7L2 12Z', none, '#555') + p('M12 12H21') + o(12, 12, 21, 12), 1],
    ['圆角', p('M4 5H21V20', none, '#999') + p('M4 5H12Q20 6 20 20', none, '#111', 2) + n(4, 5, 20, 20), 1],
    ['曲面角点', p('M7 4L20 5 16 19 3 16Z', B, '#345') + p('M5 10L18 11M13 4L10 18', none, '#345') + n(8, 4, 20, 4, 3, 16, 15, 20), 1],
    ['曲面圆角', p('M5 3L12 2Q19 6 21 14L19 21 15 17Q12 10 3 8Z', B) + p('M5 3L10 2 8 9 3 8ZM15 14L21 13 19 21 14 18Z', '#eee'), 1],
    ['立方体', cube, 1],
    ['布尔球', c(16, 8, 7, B, '#123') + c(8, 16, 7, B, '#123') + p('M1 16H15M8 9V23M10 8H23M16 1V15', none, '#345'), 1],
    ['圆柱面', e(12, 3, 6, 2) + p('M1 9Q12 13 23 9V20Q12 24 1 20Z', B) + e(12, 16, 6, 3, '#fff', '#88f'), 1],
    ['网格面', p('M7 5Q14 8 22 2L18 17Q9 16 2 21Z', B) + p('M5 12Q13 13 20 8M12 6L9 19M17 5L14 18', none, '#234'), 1],
    ['拼图', p('M2 7L6 6 5 3 8 1 10 5 14 3 15 7 12 9 14 12 9 14 7 11 3 12Z', '#f59a18') + p('M10 13L14 12 14 9 18 9 18 13 22 14 20 17 22 20 17 22 15 19 11 20 12 17Z', '#fff')],
    ['炸开', p('M1 23V5L7 14 9 2 12 13 19 3 16 15 23 18 15 20 22 23Z', '#f6990c', '#a60')],
    ['修剪', p('M1 10H12V15H1ZM12 14L17 12 23 19 18 22Z', '#fff') + p('M11 2H18L13 15Z', '#1f3c95', none)],
    ['分割', p('M2 11H21V16H2Z', '#fff') + p('M13 2H19L14 16Z', '#1f3c95', none)],
    ['群组', c(12, 8, 5, '#a5a5ff', '#111', 2) + c(7, 15, 5, '#fff', '#111', 2) + c(17, 15, 5, '#1c1c82', '#111', 2), 1],
    ['解组', c(12, 6, 4, '#a5a5ff', '#447') + c(6, 16, 4, '#fff', '#447') + c(18, 16, 4, '#1c1c82', '#447')],
    ['调点', p('M2 6Q15 5 18 21', none, '#111', 2) + n(8, 6, 17, 15)],
    ['偏移', p('M2 7Q14 7 17 22', none, '#111', 2) + `<path d="M2 2H12L20 10V22" fill="none" stroke="#111" stroke-dasharray="1 2"/>` + n(9, 3, 21, 14), 1],
    ['文字', p('M3 2H21V8H18L17 6H14V19L17 22H7L10 19V6H7L6 8H3Z', '#5d8ae8', '#124')],
    ['移动', p('M4 14H10V20H4Z', '#eee') + p('M15 2H21V8H15Z', B) + p('M9 13L14 8M11 8H14V11'), 1],
    ['复制', p('M3 3H9V9H3ZM15 5H21V11H15ZM12 9H18V15H12ZM15 16H21V22H15Z', B) + p('M3 15H9V21H3Z', '#eee')],
    ['旋转', p('M3 3H8V17H3Z', '#fff') + p('M11 19L20 9 23 12 14 22Z', B) + p('M9 3Q14 4 16 8M16 4V8H12')],
    ['实体', p('M2 7L13 2 22 6V17L12 22 2 18Z', '#7294ee') + p('M2 7L12 11 22 6M12 11V22') + p('M9 14H15V23L9 21Z', '#fff'), 1],
    ['法向', p('M2 19H17L22 15H8Z', B) + p('M5 16V5M3 7L5 3 7 7M11 16V5M9 7L11 3 13 7M17 16V5M15 7L17 3 19 7', none, '#fff', 2), 1],
    ['阵列', n(4, 4, 12, 4, 20, 4, 4, 12, 12, 12, 20, 12, 12, 20, 20, 20).replaceAll('#fff', '#9db2ff') + n(4, 20), 1],
    ['对齐', p('M7 2H17V7H7ZM9 10H15V14H9ZM8 17H16V23H8Z', '#fff') + p('M12 1V23', none, 'red'), 1],
    ['弯折', p('M2 8L9 2V15L5 21 2 19Z', '#eee') + p('M12 5L20 4 16 20 8 22Z', B), 1],
    ['检查', p('M4 13L9 19Q13 9 22 4', none, '#111', 2), 1],
    ['图块', p('M2 7L9 4 14 7V16L7 18 2 15Z', '#ccc') + p('M16 6L23 20Q17 24 12 20Z', '#aaa'), 1],
    ['锥', p('M11 10L20 18 12 22 3 19Z', '#f5c35a') + p('M11 10L12 22') + p('M9 6L14 1H22V6L16 7Z', '#ddd'), 1],
    ['弯曲', p('M19 18H13Q6 17 7 11', none, '#123a8e', 8) + p('M19 17H13Q7 15 7 11', none, '#86a4f0', 4) + p('M8 0L12 4M12 0L8 4', none, 'red')],
    ['绕轴', p('M8 6L16 4 20 15 12 20Z', '#94b7e8') + p('M2 2L23 22', none, '#e55', 2) + p('M11 8L17 14', none, '#ee6', 2) + p('M14 2H19M7 22L4 18')],
    ['滑动', p('M5 3H19M12 4V11M10 9L12 12 14 9M6 13H18Q23 14 23 18Q22 22 18 22H6Q1 21 1 18Q2 13 6 13Z') + o(5, 3, 19, 3, 7, 18, 17, 18)],
    ['螺钉', p('M6 5Q12-1 18 5V9H15V21L12 23 10 21V9H6Z', '#1c79d8', '#024')],
    ['左右', p('M12 1V23', none, '#e22', 2) + p('M2 10H6V7L11 12 6 17V14H2ZM22 10H18V7L13 12 18 17V14H22Z', '#e11', '#700')],
    ['上下', p('M1 12H23', none, '#2a3', 2) + p('M10 2H14V5H17L12 10 7 5H10ZM10 22H14V19H17L12 14 7 19H10Z', '#1c9c2c', '#052')],
    ['渲染', c(12, 11, 9, 'url(#ball)', none) + p('M1 22H22', none, '#777', 2)],
    ['贴面', p('M8 4L21 1 22 8 17 19 2 21 5 15 2 9Z', B) + p('M5 12L17 10', none, '#fff', 2) + p('M7 7L10 10M10 7L7 10', none, '#d00')],
    ['剪线', p('M2 5Q12 12 22 5M2 12Q12 12 20 22M22 12Q12 12 4 22', none, '#111', 2) + p('M9 1H17L13 13Z', '#27a9ee', none)],
    ['橙', p('M4 3H10V8L8 13 10 20H4L2 14 4 9ZM15 3H20L22 10 20 14 22 20H15L13 13 15 9Z', '#ffa713', '#111', 2)],
    ['选形', c(8, 7, 4, '#fc3') + p('M14 6H20V13H14Z', '#fc3') + p('M11 15L15 20H7Z', '#fff', '#a54') + corners],
    ['保存', p('M2 2H22V22H2Z', '#b9b184', '#111', 2) + p('M5 4H19V10H5Z', '#fff') + t(7, 10, 7, '1-5') + p('M7 14H17V22H7Z', '#777')],
    ['蓝面', p('M2 10Q10 3 17 7L13 20Q7 15 2 10Z', '#2369b5', '#024') + p('M17 7L22 2M18 2H22V6', none, '#159', 2)],
    ['蓝点', p('M3 3L12 8 21 3M3 21Q12 0 21 21M3 7V3H7M17 3H21V7', none, '#246db5', 2) + c(4, 20, 2, '#fff', '#246') + c(20, 20, 2, '#fff', '#246')],
    ['红S', c(12, 12, 11, '#345', none) + `<circle cx="12" cy="12" r="9" fill="none" stroke="#7dd" stroke-width="3" stroke-dasharray="4 3"/>` + c(12, 12, 7, '#ddd', '#d11') + t(8, 17, 13, 'S', '#d11')],
    ['M', p('M1 1H23V23H1Z', '#f52158', none) + p('M5 20V12L12 19 19 12V20', none, '#fff', 3) + p('M5 14V6L12 13 19 6V12', none, '#ffd52e', 3)],
    ['双弧', p('M2 20Q3 5 22 5M7 22Q8 11 22 11', none, '#744', 2) + p('M2 2L22 22', none, '#3a3') + o(8, 17, 18, 12)],
    ['针', p('M1 23L21 2', none, '#111', 3) + p('M3 14Q0 9 6 9T12 12Q14 3 20 8M10 15Q14 22 18 17T15 12', none, '#c11', 1)],
    ['绿球', c(12, 12, 10, '#3fa52f', '#133') + p('M4 8L18 4M3 13L21 8M5 18L20 13', none, '#9f4', 2) + p('M7 10L16 7M8 21L18 17', none, '#174', 2)],
    ['色块', p('M0 1H23V23H0Z', '#ddd', '#bbb') + p('M9 1H23V15H9Z', '#00a1ed', none)],
    ['Max', p('M2 1H22V22H2Z', '#cfe1e2', '#aac') + t(9, 14, 14, '3', '#08868c') + c(5, 18, 4, '#29438e')],
    ['涡', p('M1 1H23V23H1Z', '#333', '#111') + p('M19 9Q19 5 12 5Q5 5 5 12Q5 18 12 18Q18 18 18 13Q17 10 12 10Q9 11 10 14H13', none, '#eee', 2)]
];

const panelTools = [
    ['新建', p('M5 2H15L19 6V22H5Z', '#fff', '#333', 2)],
    ['复制', p('M4 2H13V14H4ZM10 8H20V22H10Z', '#bbb', '#888')],
    ['删除', p('M3 3L21 21M21 3L3 21', none, '#aaa', 3)],
    ['上移', p('M12 6L23 17H1Z', '#bbb', '#888')],
    ['下移', p('M12 18L23 7H1Z', '#bbb', '#888')],
    ['左移', p('M6 12L17 1V23Z', '#aaa', '#888')],
    ['过滤', p('M2 3H21L14 12V21L10 18V12Z', '#4173dc', '#124') + p('M23 18V23H18Z', '#111')],
    ['列', p('M4 2H15L19 6V22H4Z', '#ccc', '#999') + p('M23 18V23H18Z', '#999')],
    ['工具', p('M3 21L13 8', none, '#18295c', 5) + p('M4 6L12 2 21 9 17 13 13 8Z', '#444') + p('M23 18V23H18Z', '#111')],
    ['帮助', c(12, 12, 11, '#345bd0', '#679') + t(7, 18, 17, '?', '#fff')]
];

function fill(id, list) {
    document.getElementById(id).innerHTML = list.map(i => i
        ? `<button class="tool${i[2] ? ' more' : ''}" aria-label="${i[0]}"><svg viewBox="0 0 24 24">${i[1]}</svg></button>`
        : '<span class="sep"></span>').join('');
}
fill('toolbar', toolbar);
fill('side', side);
fill('panelTools', panelTools);

// layers
const bulb = on => `<svg viewBox="0 0 16 16">${p('M6 11Q3 7 4 4Q5 1 8 1Q11 1 12 4Q13 7 10 11V14H6Z', on ? '#ffef8a' : '#5b93e6', on ? '#a87b1a' : '#446')}</svg>`;
const lock = `<svg viewBox="0 0 16 16">${p('M2 7H11V15H2Z', Y, '#543')}${p('M9 7V3Q12 0 14 3V6', none, '#333', 1)}</svg>`;
const layers = [['默认', '#000'], ['线条', '#f00', 1], ['图层 01', '#0094ff', 1], ['图层 02', '#16e016', 1], ['图层 03', '#ff0090', 1], ['Vray Dome', '#000', 0], ['HDR Dome', '#000', 0]];
document.getElementById('layers').innerHTML = layers.map((l, i) => `<tr class="${i ? '' : 'default'}"><td>${l[0]}</td>
    <td>${i ? '' : `<svg viewBox="0 0 16 16">${p('M2 8L6 12 15 4', none, '#111', 2)}</svg>`}</td>
    <td>${i ? bulb(l[2]) : ''}</td><td>${i ? lock : ''}</td>
    <td><span class="swatch" style="background:${l[1]}"></span></td><td><span class="dot"></span></td></tr>`).join('');

// construction plane grid, every tenth line is a major one
document.querySelectorAll('.grid').forEach(g => {
    const x = +g.dataset.x, y = +g.dataset.y, left = +g.dataset.left, right = +g.dataset.right;
    const step = 17.27;
    let minor = '', major = '';
    for (let i = -20; i <= 20; i++) {
        const gx = Math.round(x + i * step) + 0.5, gy = Math.round(y + i * step) + 0.5;
        let d = '';
        if (gx >= left && gx <= right + 1) d += `M${gx} 608V1022`;
        if (gy > 608 && gy < 1022) d += `M${left} ${gy}H${right}`;
        if (i % 10) minor += d; else major += d;
    }
    g.innerHTML = `<path class="minor" d="${minor}"/><path class="major" d="${major}"/>`;
});
```
